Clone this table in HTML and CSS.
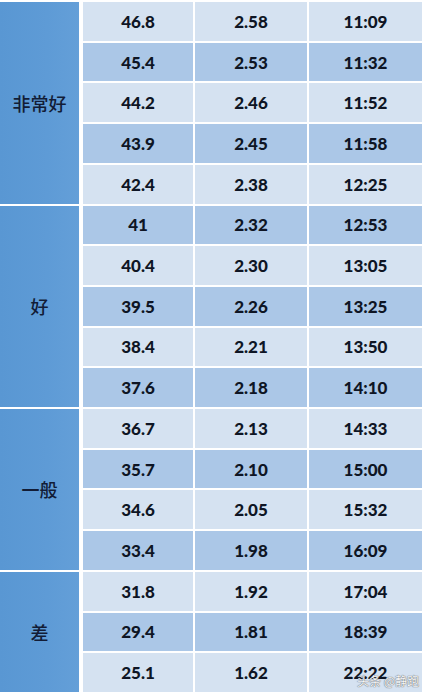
FILE: index.html
```html
<!DOCTYPE html>
<html lang="zh">
<head>
<meta charset="utf-8">
<link rel="stylesheet" href="styles.css">
</head>
<body>
<div class="sheet">
  <div class="label g1">非常好</div>
  <div class="cell light">46.8</div><div class="cell light">2.58</div><div class="cell light">11:09</div>
  <div class="cell dark">45.4</div><div class="cell dark">2.53</div><div class="cell dark">11:32</div>
  <div class="cell light">44.2</div><div class="cell light">2.46</div><div class="cell light">11:52</div>
  <div class="cell dark">43.9</div><div class="cell dark">2.45</div><div class="cell dark">11:58</div>
  <div class="cell light">42.4</div><div class="cell light">2.38</div><div class="cell light">12:25</div>
  <div class="label g2">好</div>
  <div class="cell dark">41</div><div class="cell dark">2.32</div><div class="cell dark">12:53</div>
  <div class="cell light">40.4</div><div class="cell light">2.30</div><div class="cell light">13:05</div>
  <div class="cell dark">39.5</div><div class="cell dark">2.26</div><div class="cell dark">13:25</div>
  <div class="cell light">38.4</div><div class="cell light">2.21</div><div class="cell light">13:50</div>
  <div class="cell dark">37.6</div><div class="cell dark">2.18</div><div class="cell dark">14:10</div>
  <div class="label g3">一般</div>
  <div class="cell light">36.7</div><div class="cell light">2.13</div><div class="cell light">14:33</div>
  <div class="cell dark">35.7</div><div class="cell dark">2.10</div><div class="cell dark">15:00</div>
  <div class="cell light">34.6</div><div class="cell light">2.05</div><div class="cell light">15:32</div>
  <div class="cell dark">33.4</div><div class="cell dark">1.98</div><div class="cell dark">16:09</div>
  <div class="label g4">差</div>
  <div class="cell light">31.8</div><div class="cell light">1.92</div><div class="cell light">17:04</div>
  <div class="cell dark">29.4</div><div class="cell dark">1.81</div><div class="cell dark">18:39</div>
  <div class="cell light">25.1</div><div class="cell light">1.62</div><div class="cell light">22:22</div>
</div>
<div class="watermark">头条 @静跑</div>
</body>
</html>
```

FILE: styles.css
```css
html, body {
  margin: 0;
  padding: 0;
  background: #ffffff;
  width: 424px;
  height: 695px;
  overflow: hidden;
}
body {
  position: relative;
}
.sheet {
  display: grid;
  grid-template-columns: 81px 110px 112px 113px;
  grid-template-rows: repeat(17, 1fr);
  column-gap: 2px;
  row-gap: 2px;
  height: 690px;
  padding: 2px 2px 3px 0;
}
.label {
  grid-column: 1;
  margin-right: 2px;
  background: linear-gradient(90deg, #5997d3 0%, #5e9bd6 60%, #649fd8 100%);
  display: flex;
  align-items: center;
  justify-content: center;
  font-family: "Noto Sans CJK SC", sans-serif;
  font-size: 18px;
  font-weight: 500;
  color: #121c36;
}
.g1 { grid-row: 1 / span 5; }
.g2 { grid-row: 6 / span 5; }
.g3 { grid-row: 11 / span 4; }
.g4 { grid-row: 15 / span 3; }
.cell {
  display: flex;
  align-items: center;
  justify-content: center;
  font-family: "Lato", "Open Sans", sans-serif;
  font-weight: 900;
  font-size: 17px;
  color: #0e1524;
}
.light { background: #d5e2f1; }
.dark { background: #abc7e7; }
.watermark {
  position: absolute;
  left: 357px;
  top: 672px;
  font-family: "Noto Sans CJK SC", sans-serif;
  font-size: 12px;
  color: #f4f6f9;
  text-shadow: 0 0 1px #666, 0 0 1px #666;
  white-space: nowrap;
}
```
